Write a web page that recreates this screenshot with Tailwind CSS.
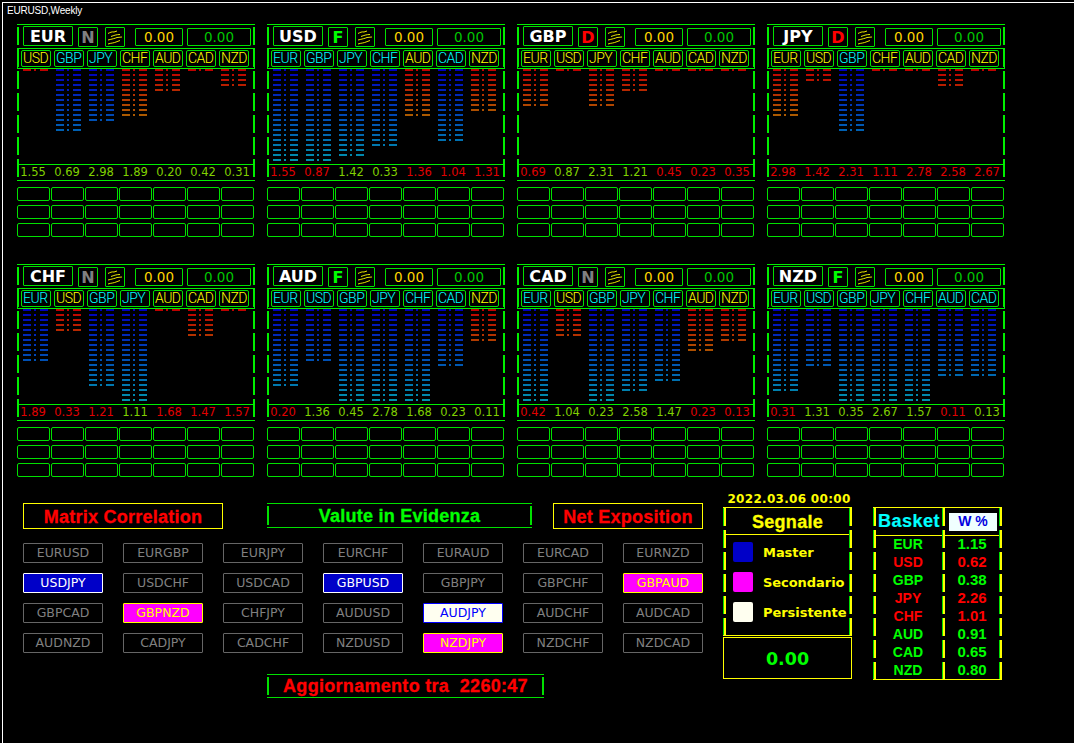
<!DOCTYPE html>
<html lang="it">
<head>
    <meta charset="UTF-8">
    <title>EURUSD,Weekly</title>
    <script src="https://cdn.jsdelivr.net/npm/@tailwindcss/browser@4"></script>
</head>
<body class="bg-black">
<div class="ml-[2px] mt-[2px] h-[741px] overflow-hidden border-l border-t border-white font-['DejaVu_Sans',sans-serif]">
    <!-- Titolo -->
    <div class="h-[14px] pl-[4px] pt-[1px] font-['Liberation_Sans',sans-serif] text-[10px] leading-[14px] tracking-[-0.2px] text-white">EURUSD,Weekly</div>

    <!-- Pannelli valute -->
    <div id="panels" class="ml-[14px] mt-[7px] grid w-[988px] grid-cols-[238px_238px_238px_238px] gap-x-[12px] gap-y-[27px]"></div>

    <!-- Parte bassa -->
    <div class="ml-[20px] mt-[13px] flex items-start">
        <div class="mt-[13px] w-[680px]">
            <div class="flex font-['Liberation_Sans',sans-serif] text-[18px] font-bold tracking-[0.25px] [-webkit-text-stroke:0.3px]">
                <div class="flex h-[26px] w-[200px] items-center justify-center border border-[#ffff00] pt-[2px] text-[#ff0000]">Matrix Correlation</div>
                <div class="relative ml-[44px] flex h-[25px] w-[265px] items-center justify-center border-y border-[#00e000] pt-[2px] text-[#00ff00]">
                    Valute in Evidenza
                    <div class="absolute left-0 top-[2px] h-[19px] w-[2px] bg-[#00e000]"></div>
                    <div class="absolute right-0 top-[2px] h-[19px] w-[2px] bg-[#00e000]"></div>
                </div>
                <div class="ml-[21px] flex h-[26px] w-[150px] items-center justify-center border border-[#ffff00] pt-[2px] text-[#ff0000]">Net Exposition</div>
            </div>

            <div id="pairs" class="mt-[14px] grid grid-cols-[80px_80px_80px_80px_80px_80px_80px] gap-x-[20px] gap-y-[10px] text-[12.5px]"></div>

            <div class="relative ml-[244px] mt-[21px] flex h-[24px] w-[277px] items-center justify-center whitespace-pre border-y border-[#00e000] font-['Liberation_Sans',sans-serif] text-[18px] font-bold tracking-[0.3px] text-[#ff0000] [-webkit-text-stroke:0.3px]">Aggiornamento tra  2260:47<div class="absolute left-0 top-[2px] h-[18px] w-[2px] bg-[#00e000]"></div><div class="absolute right-0 top-[2px] h-[18px] w-[2px] bg-[#00e000]"></div></div>
        </div>

        <!-- Segnale -->
        <div class="ml-[20px] w-[129px]">
            <div class="h-[17px] pl-[3px] pt-[1px] text-center text-[12px] font-bold leading-[16px] tracking-[0.3px] text-[#ffff00]">2022.03.06 00:00</div>
            <div class="relative h-[129px] border-y border-[#ffff00]">
                <div class="flex h-[27px] items-center justify-center border-b border-[#ffff00] pt-[3px] font-['Liberation_Sans',sans-serif] text-[18px] font-bold tracking-[0.3px] text-[#ffff00] [-webkit-text-stroke:0.3px]">Segnale</div>
                <div class="flex flex-col gap-y-[10px] pl-[10px] pt-[7px] text-[13px] font-bold tracking-[-0.05px] text-[#ffff00]">
                    <div class="flex h-[20px] items-center gap-x-[10px]"><span class="h-[20px] w-[20px] rounded-[2px] bg-[#0000c8]"></span><span class="pt-[1px]">Master</span></div>
                    <div class="flex h-[20px] items-center gap-x-[10px]"><span class="h-[20px] w-[20px] rounded-[2px] bg-[#ff00ff]"></span><span class="pt-[1px]">Secondario</span></div>
                    <div class="flex h-[20px] items-center gap-x-[10px]"><span class="h-[20px] w-[20px] rounded-[2px] bg-[#fffff0]"></span><span class="pt-[1px]">Persistente</span></div>
                </div>
                <div class="side absolute left-0 top-0 h-[127px]"></div>
                <div class="side absolute right-0 top-0 h-[127px]"></div>
            </div>
            <div class="mt-[1px] flex h-[42px] items-center justify-center border border-[#ffff00] pt-[3px] text-[17.5px] font-bold text-[#00ff00]">0.00</div>
        </div>

        <!-- Basket -->
        <div class="relative ml-[21px] mt-[17px] h-[173px] w-[129px] border-y border-[#ffff00]">
            <div class="flex h-[28px] items-center border-b border-[#ffff00]">
                <div class="w-[70px] pl-[2px] text-center font-['Liberation_Sans',sans-serif] text-[18px] font-bold tracking-[0.5px] text-[#00ffff] [-webkit-text-stroke:0.2px]">Basket</div>
                <div class="ml-[6px] flex h-[18px] w-[48px] items-center justify-center bg-[#f0ffff] font-['Liberation_Sans',sans-serif] text-[14px] font-bold text-[#0000e0]">W %</div>
            </div>
            <div id="basket" class="font-['Liberation_Sans',sans-serif] font-bold"></div>
            <div class="side absolute left-0 top-0 h-[171px]"></div>
            <div class="side absolute left-[69px] top-0 h-[171px]"></div>
            <div class="side absolute right-0 top-0 h-[171px]"></div>
        </div>
    </div>
</div>

<script>
    // Dati dei pannelli: nome, tipo, valute, barre, valori (g = verde, r = rosso)
    const panels = [
        ['EUR', 'N', 'USD GBP JPY CHF AUD CAD NZD', 'yccyyyy', [1,13,11,10,5,1,4], '1.55 0.69 2.98 1.89 0.20 0.42 0.31', 'ggggggg'],
        ['USD', 'F', 'EUR GBP JPY CHF AUD CAD NZD', 'ccccycy', [19,19,18,16,10,15,9], '1.55 0.87 1.42 0.33 1.36 1.04 1.31', 'rrggrrr'],
        ['GBP', 'D', 'EUR USD JPY CHF AUD CAD NZD', 'yyyyyyy', [8,1,8,5,1,1,1], '0.69 0.87 2.31 1.21 0.45 0.23 0.35', 'rgggrrr'],
        ['JPY', 'D', 'EUR USD GBP CHF AUD CAD NZD', 'yycyyyy', [10,3,13,1,1,4,1], '2.98 1.42 2.31 1.11 2.78 2.58 2.67', 'rrrrrrr'],
        ['CHF', 'N', 'EUR USD GBP JPY AUD CAD NZD', 'cyccyyy', [11,5,16,19,1,6,1], '1.89 0.33 1.21 1.11 1.68 1.47 1.57', 'rrrgrrr'],
        ['AUD', 'F', 'EUR USD GBP JPY CHF CAD NZD', 'ccccccy', [16,11,19,19,19,12,7], '0.20 1.36 0.45 2.78 1.68 0.23 0.11', 'rgggggg'],
        ['CAD', 'N', 'EUR USD GBP JPY CHF AUD NZD', 'cycccyy', [19,6,19,17,15,9,7], '0.42 1.04 0.23 2.58 1.47 0.23 0.13', 'rggggrr'],
        ['NZD', 'F', 'EUR USD GBP JPY CHF AUD CAD', 'ccccccc', [17,12,19,19,19,14,14], '0.31 1.31 0.35 2.67 1.57 0.11 0.13', 'rggggrg']
    ];

    const flagColor = { N: 'text-[#808080]', F: 'text-[#00ff00]', D: 'text-[#ff0000]' };
    const sideBar = 'bg-[repeating-linear-gradient(to_bottom,#00f000_0,#00f000_18px,transparent_18px,transparent_22px)]';

    const icon = `<svg width="18" height="18" viewBox="0 0 18 18" fill="none" stroke="#ffff00" stroke-width="0.9"><path d="M2 5.500c2-1 4-2 6-1.500l3-1M5 8.500c3-1 5-2 9-2M2 12c4-1 7-1.500 9-2.500l5-.5M2 16c3-1 6-1 8-2l4-1.500"/></svg>`;

    function barColor(kind, i) {
        if (kind === 'c') return `rgb(0,${Math.round(i * 8)},${190 - i})`;
        return `rgb(${190 - i * 2},${i * 10},0)`;
    }

    function bars(kind, n) {
        let rows = '';
        for (let i = 0; i < n; i++) {
            const c = barColor(kind, i);
            rows += `<div class="mb-[3px] flex h-[2px] pl-[2px]"><span class="w-[8px]" style="background:${c}"></span><span class="ml-[3px] w-[2px]" style="background:${c}"></span><span class="ml-[4px] w-[8px]" style="background:${c}"></span></div>`;
        }
        return `<div class="w-[33px]">${rows}</div>`;
    }

    document.getElementById('panels').innerHTML = panels.map(([name, flag, curs, kinds, counts, vals, valColors]) => {
        const chips = curs.split(' ').map((c, i) =>
            `<div class="mr-[3px] flex h-[17px] w-[30px] items-center rounded-[2px] border border-[#00e000] pl-[1px] font-['Roboto',sans-serif] text-[14px] font-light tracking-[-0.5px] ${kinds[i] === 'c' ? 'text-[#00ffff]' : 'text-[#ffff00]'}">${c}</div>`).join('');
        const chart = counts.map((n, i) => bars(kinds[i], n)).join('');
        const values = vals.split(' ').map((v, i) =>
            `<div class="w-[34px] pr-[2px] text-center ${valColors[i] === 'r' ? 'text-[#e00000]' : 'text-[#80d000]'}">${v}</div>`).join('');
        let empties = '';
        for (let i = 0; i < 21; i++) empties += '<div class="h-[14px] rounded-[2px] border border-[#00e000]"></div>';

        return `<div class="relative h-[213px] w-[238px]">
            <div class="flex h-[24px] items-start border-t border-[#00f000] pl-[6px] pt-[1px]">
                <div class="flex h-[20px] w-[50px] items-center justify-center rounded-[1px] border border-[#00e000] pt-[1px] text-[16px] font-bold text-white">${name}</div>
                <div class="ml-[5px] mt-[1px] flex h-[20px] w-[20px] items-center justify-center rounded-[1px] border border-[#00e000] pt-[1px] text-[16px] font-bold ${flagColor[flag]}">${flag}</div>
                <div class="ml-[7px] mt-[1px] flex h-[20px] w-[20px] items-center justify-center rounded-[1px] border border-[#00e000]">${icon}</div>
                <div class="ml-[10px] mt-[2px] flex h-[18px] w-[48px] items-center justify-center rounded-[1px] border border-[#00e000] text-[13.5px] text-[#ffd800]">0.00</div>
                <div class="ml-[4px] mt-[2px] flex h-[18px] w-[64px] items-center justify-center rounded-[1px] border border-[#00e000] text-[13.5px] text-[#00c800]">0.00</div>
            </div>
            <div class="flex h-[21px] items-center border border-[#00f000] pl-[3px]">${chips}</div>
            <div class="flex h-[95px] overflow-hidden pl-[4px]">${chart}</div>
            <div class="flex h-[17px] items-center border-y border-[#00f000] pt-[1px] text-[11.5px]">${values}</div>
            <div class="mt-[6px] grid grid-cols-[repeat(7,33px)] gap-x-[1px] gap-y-[4px]">${empties}</div>
            <div class="absolute left-0 top-[3px] h-[151px] w-[2px] ${sideBar}"></div>
            <div class="absolute right-0 top-[3px] h-[151px] w-[2px] ${sideBar}"></div>
        </div>`;
    }).join('');

    // Coppie
    const off = 'border-[#666666] text-[#808080]';
    const master = 'border-white bg-[#0000c8] text-white';
    const sec = 'border-[#ffff00] bg-[#ff00ff] text-[#ffff00]';
    const pers = 'border-[#0000ff] bg-[#fffff0] text-[#0000ff]';
    const pairs = [
        ['EURUSD',off],['EURGBP',off],['EURJPY',off],['EURCHF',off],['EURAUD',off],['EURCAD',off],['EURNZD',off],
        ['USDJPY',master],['USDCHF',off],['USDCAD',off],['GBPUSD',master],['GBPJPY',off],['GBPCHF',off],['GBPAUD',sec],
        ['GBPCAD',off],['GBPNZD',sec],['CHFJPY',off],['AUDUSD',off],['AUDJPY',pers],['AUDCHF',off],['AUDCAD',off],
        ['AUDNZD',off],['CADJPY',off],['CADCHF',off],['NZDUSD',off],['NZDJPY',sec],['NZDCHF',off],['NZDCAD',off]
    ];
    document.getElementById('pairs').innerHTML = pairs.map(([p, cls]) =>
        `<div class="flex h-[20px] items-center justify-center rounded-[1px] border ${cls}">${p}</div>`).join('');

    // Basket
    const basket = [['EUR','1.15',0],['USD','0.62',1],['GBP','0.38',0],['JPY','2.26',1],['CHF','1.01',1],['AUD','0.91',0],['CAD','0.65',0],['NZD','0.80',0]];
    document.getElementById('basket').innerHTML = basket.map(([c, v, red]) =>
        `<div class="flex h-[18px] items-center pb-[1px] ${red ? 'text-[#ff0000]' : 'text-[#00ff00]'}"><div class="w-[70px] text-center text-[14px]">${c}</div><div class="w-[58px] text-center text-[15px]">${v}</div></div>`).join('');

    // Barre laterali gialle e verdi
    document.querySelectorAll('.side').forEach(el => {
        el.innerHTML = '<div class="flex h-full"><div class="h-full w-[1px] bg-[repeating-linear-gradient(to_bottom,#00e000_0,#00e000_18px,transparent_18px,transparent_22px)]"></div><div class="h-full w-[2px] bg-[repeating-linear-gradient(to_bottom,#ffff00_0,#ffff00_18px,transparent_18px,transparent_22px)]"></div></div>';
    });
</script>
</body>
</html>
